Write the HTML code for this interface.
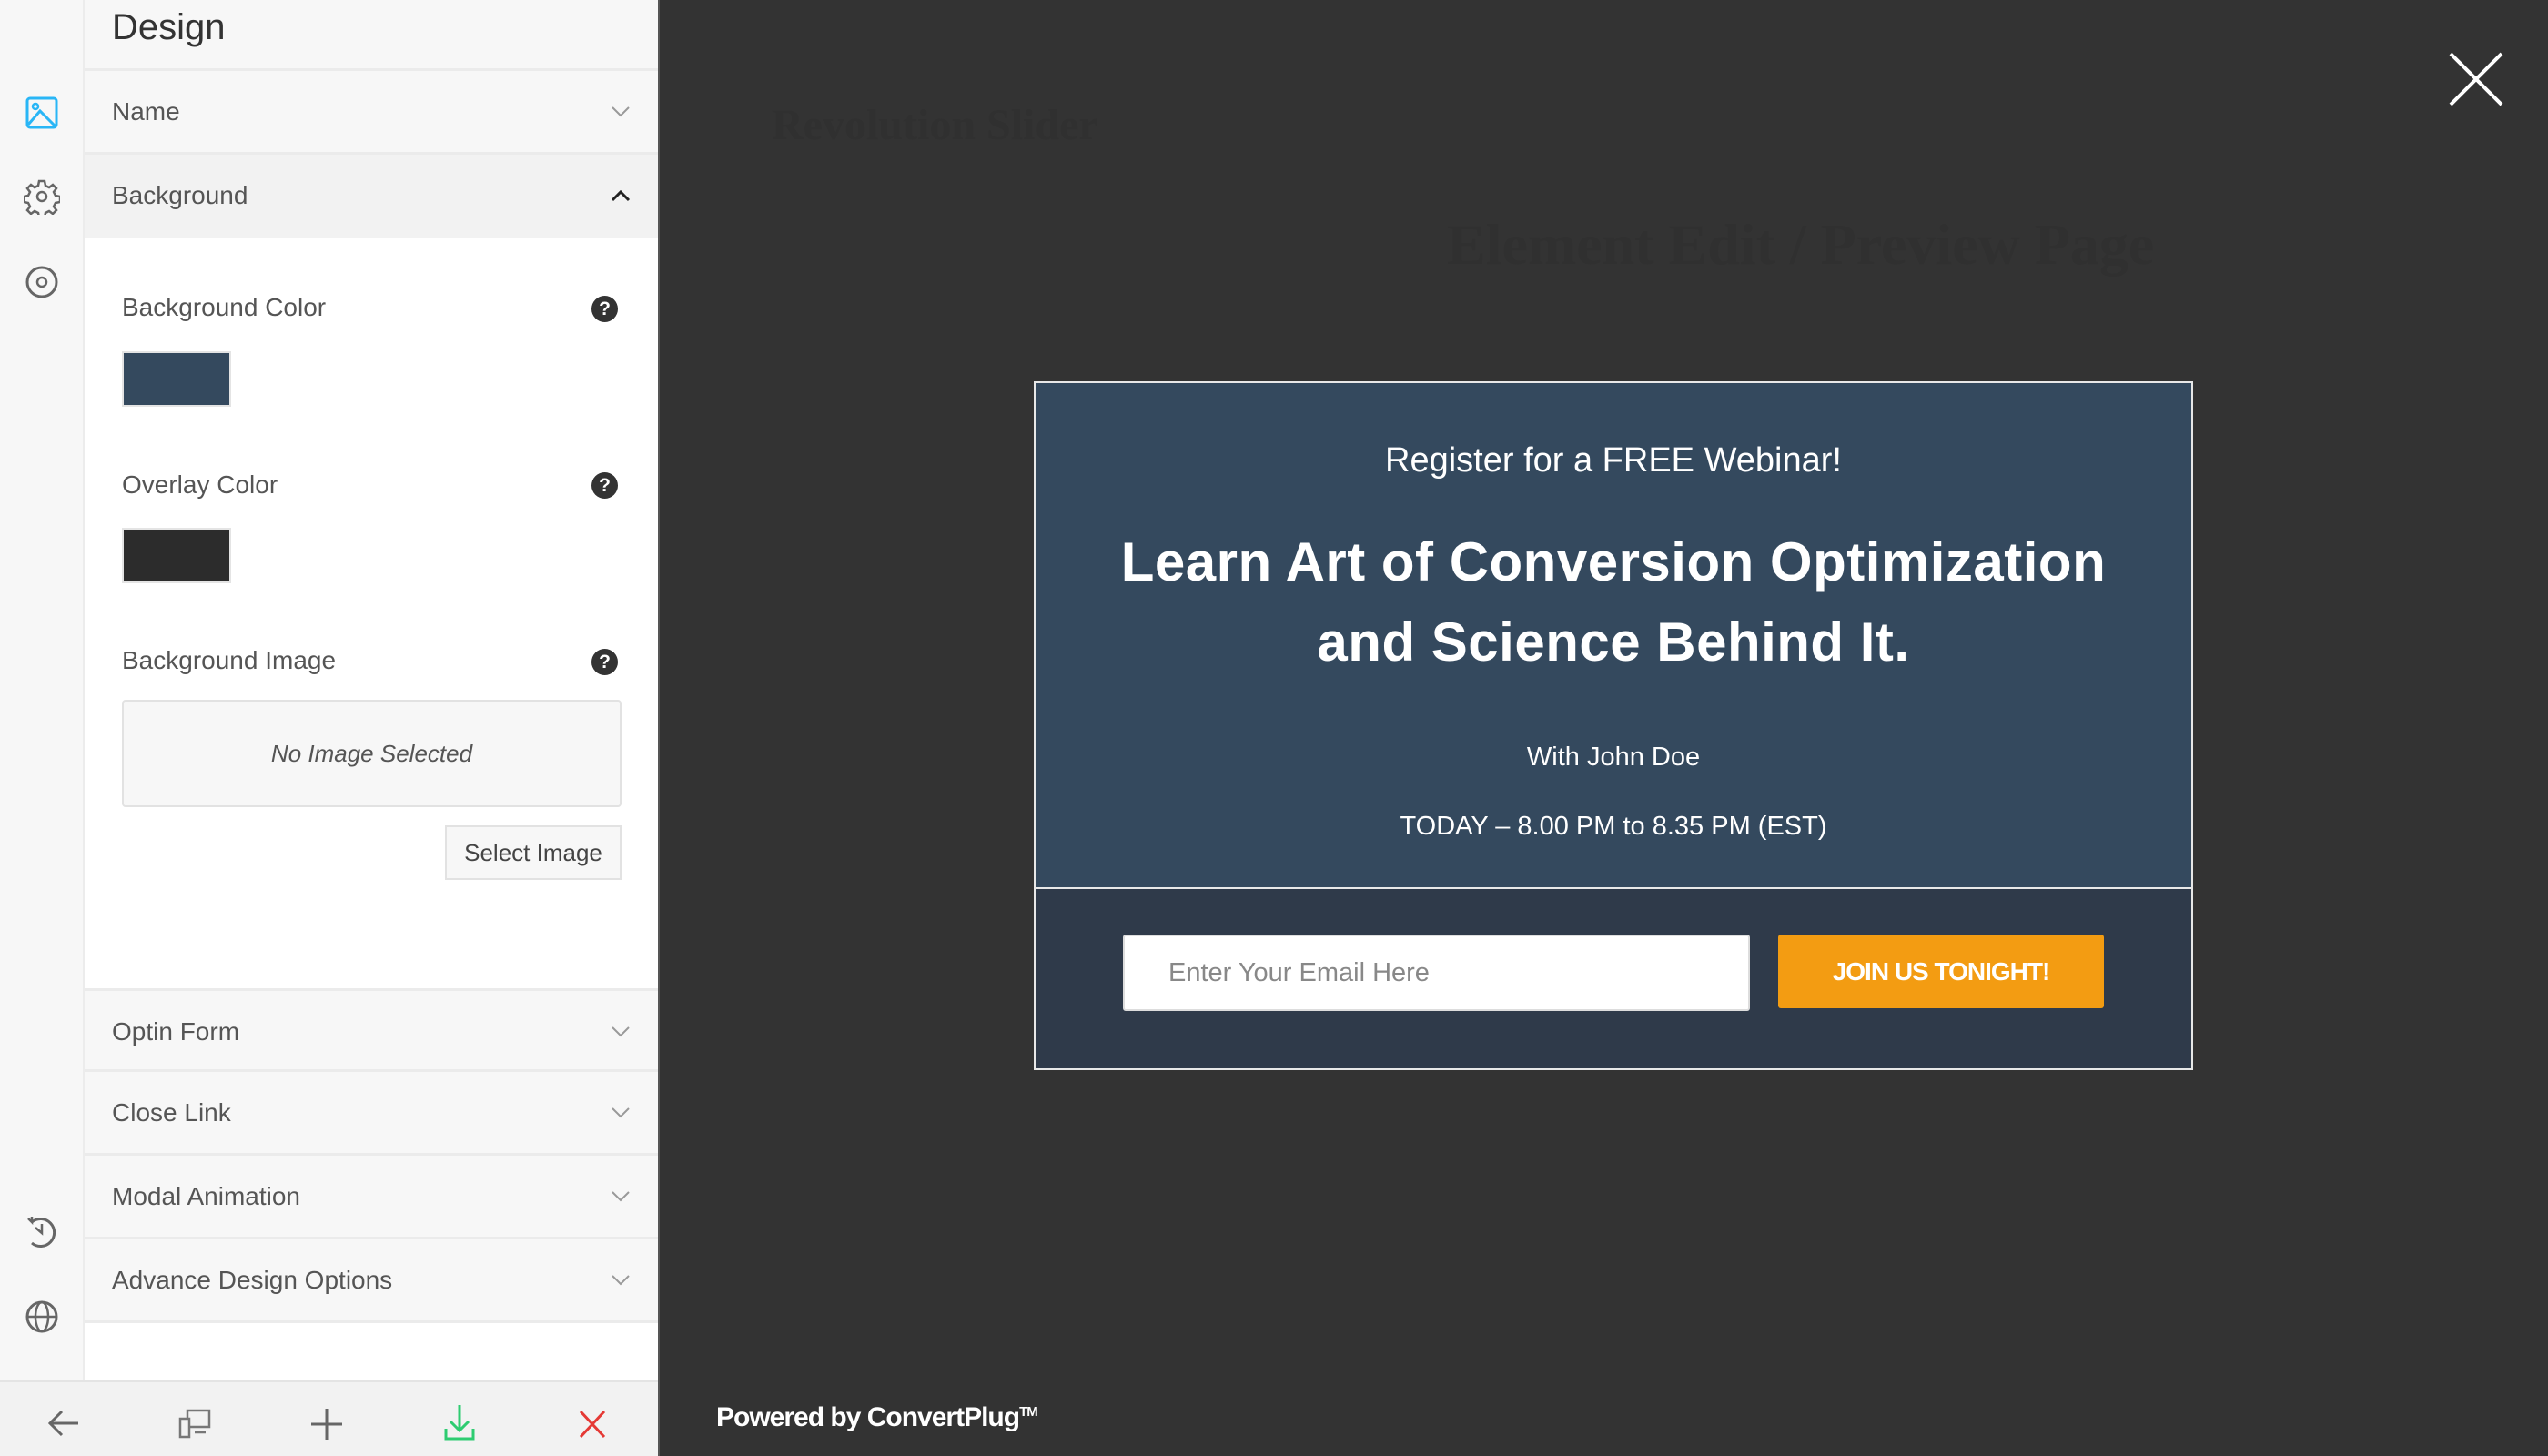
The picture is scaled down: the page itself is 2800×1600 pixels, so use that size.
<!DOCTYPE html>
<html><head><meta charset="utf-8"><style>
*{margin:0;padding:0;box-sizing:border-box}
body{width:2800px;height:1600px;background:#333;font-family:"Liberation Sans",sans-serif;position:relative;overflow:hidden}
.a{position:absolute}
.strip{left:0;top:0;width:93px;height:1516px;background:#f7f7f7;border-right:2px solid #ececec}
.panel{left:93px;top:0;width:630px;height:1516px;background:#fff}
.row{position:absolute;left:93px;width:630px;height:92px;background:#f7f7f7;border-bottom:3px solid #ebebeb;font-size:28px;color:#555;padding-left:30px;line-height:90px}
.row svg{position:absolute;right:30px;top:38px}
.lbl{position:absolute;left:134px;font-size:28px;color:#555}
.q{position:absolute;left:650px;width:29px;height:29px;border-radius:50%;background:#333;color:#fff;font-size:21px;font-weight:bold;text-align:center;line-height:29px}
.mt{position:absolute;left:1137px;width:1272px;text-align:center;color:#fff}
</style></head><body>
<div class="a strip"></div>
<div class="a panel"></div>
<div class="a" style="left:93px;top:0;width:630px;height:78px;background:#f7f7f7;border-bottom:3px solid #ebebeb"></div>
<div class="a" style="left:123px;top:8px;font-size:40px;color:#333">Design</div>
<div class="a" style="left:723px;top:0;width:2px;height:1600px;background:#555"></div>

<div class="row" style="top:78px">Name<svg width="22" height="14"><path d="M2 2l9 9 9-9" fill="none" stroke="#999" stroke-width="2"/></svg></div>
<div class="row" style="top:170px;background:#f2f2f2;border:none;height:91px">Background<svg width="22" height="14"><path d="M2 12l9-9 9 9" fill="none" stroke="#222" stroke-width="3"/></svg></div>

<div class="lbl" style="top:322px">Background Color</div><div class="q" style="top:325px">?</div>
<div class="a" style="left:134px;top:386px;width:120px;height:61px;background:#34495e;border:2px solid #e4e4e4"></div>
<div class="lbl" style="top:517px">Overlay Color</div><div class="q" style="top:519px">?</div>
<div class="a" style="left:134px;top:580px;width:120px;height:61px;background:#2c2c2c;border:2px solid #e4e4e4"></div>
<div class="lbl" style="top:710px">Background Image</div><div class="q" style="top:713px">?</div>
<div class="a" style="left:134px;top:769px;width:549px;height:118px;background:#f7f7f7;border:2px solid #e2e2e2;border-radius:4px;text-align:center;line-height:114px;font-size:26px;font-style:italic;color:#555">No Image Selected</div>
<div class="a" style="left:489px;top:907px;width:194px;height:60px;background:#f7f7f7;border:2px solid #e2e2e2;text-align:center;line-height:56px;font-size:26px;color:#444">Select Image</div>

<div class="row" style="top:1086px;border-top:3px solid #ebebeb">Optin Form<svg width="22" height="14"><path d="M2 2l9 9 9-9" fill="none" stroke="#999" stroke-width="2"/></svg></div>
<div class="row" style="top:1178px">Close Link<svg width="22" height="14"><path d="M2 2l9 9 9-9" fill="none" stroke="#999" stroke-width="2"/></svg></div>
<div class="row" style="top:1270px">Modal Animation<svg width="22" height="14"><path d="M2 2l9 9 9-9" fill="none" stroke="#999" stroke-width="2"/></svg></div>
<div class="row" style="top:1362px">Advance Design Options<svg width="22" height="14"><path d="M2 2l9 9 9-9" fill="none" stroke="#999" stroke-width="2"/></svg></div>

<svg class="a" style="left:28px;top:106px" width="36" height="36"><rect x="2" y="2" width="32" height="32" rx="3" fill="none" stroke="#29b6f6" stroke-width="3"/><circle cx="11" cy="11" r="3" fill="none" stroke="#29b6f6" stroke-width="2.5"/><path d="M3 31l13-15 17 17" fill="none" stroke="#29b6f6" stroke-width="3"/></svg>
<svg class="a" style="left:26px;top:196px" width="40" height="40" viewBox="0 0 40 40"><path d="M17 3h6l1 5 4 2 4-3 4 4-3 4 2 4 5 1v6l-5 1-2 4 3 4-4 4-4-3-4 2-1 5h-6l-1-5-4-2-4 3-4-4 3-4-2-4-5-1v-6l5-1 2-4-3-4 4-4 4 3 4-2z" fill="none" stroke="#666" stroke-width="2.5"/><circle cx="20" cy="20" r="5" fill="none" stroke="#666" stroke-width="2.5"/></svg>
<svg class="a" style="left:27px;top:291px" width="38" height="38"><circle cx="19" cy="19" r="16" fill="none" stroke="#666" stroke-width="3"/><circle cx="19" cy="19" r="5" fill="none" stroke="#666" stroke-width="2.5"/></svg>
<svg class="a" style="left:27px;top:1335px" width="38" height="38"><path d="M8 8A15 15 0 1 1 8 31" fill="none" stroke="#666" stroke-width="3"/><path d="M4 4l4 4v-6M19 10v10l-7-6" fill="none" stroke="#666" stroke-width="2.5"/></svg>
<svg class="a" style="left:27px;top:1428px" width="38" height="38"><circle cx="19" cy="19" r="16" fill="none" stroke="#666" stroke-width="3"/><ellipse cx="19" cy="19" rx="7" ry="16" fill="none" stroke="#666" stroke-width="2.5"/><path d="M3 19h32" stroke="#666" stroke-width="2.5"/></svg>

<div class="a" style="left:0;top:1516px;width:723px;height:84px;background:#f2f2f2;border-top:3px solid #e4e4e4"></div>
<svg class="a" style="left:52px;top:1548px" width="36" height="32"><path d="M34 16H4M16 3L3 16l13 13" fill="none" stroke="#666" stroke-width="3"/></svg>
<svg class="a" style="left:196px;top:1547px" width="36" height="36"><rect x="10" y="3" width="24" height="18" fill="none" stroke="#777" stroke-width="2.5"/><rect x="2" y="12" width="10" height="20" fill="#f2f2f2" stroke="#777" stroke-width="2.5"/><path d="M18 27h12" stroke="#777" stroke-width="2.5"/></svg>
<svg class="a" style="left:341px;top:1547px" width="36" height="36"><path d="M18 1v34M1 18h34" stroke="#666" stroke-width="3"/></svg>
<svg class="a" style="left:487px;top:1542px" width="36" height="42"><path d="M18 2v28M8 20l10 10 10-10M3 28v11h30V28" fill="none" stroke="#2ecc71" stroke-width="3"/></svg>
<svg class="a" style="left:635px;top:1549px" width="32" height="32"><path d="M3 2l26 28M29 2L3 30" stroke="#e53935" stroke-width="3"/></svg>

<div class="a" style="left:848px;top:110px;font-size:48px;font-weight:bold;color:#303030;font-family:'Liberation Serif',serif">Revolution Slider</div>
<div class="a" style="left:1590px;top:232px;font-size:64px;font-weight:bold;color:#303030;font-family:'Liberation Serif',serif">Element Edit / Preview Page</div>

<svg class="a" style="left:2690px;top:56px" width="62" height="62"><path d="M3 3l56 56M59 3L3 59" stroke="#fff" stroke-width="4"/></svg>

<div class="a" style="left:1136px;top:419px;width:1274px;height:757px;border:2px solid #e8e8e8;background:#2f3a4a"></div>
<div class="a" style="left:1138px;top:421px;width:1270px;height:556px;background:#34495e;border-bottom:2px solid #e8e8e8"></div>
<div class="mt" style="top:485px;font-size:38px">Register for a FREE Webinar!</div>
<div class="mt" style="top:574px;font-size:60px;font-weight:bold;line-height:88px;letter-spacing:0.5px">Learn Art of Conversion Optimization<br>and Science Behind It.</div>
<div class="mt" style="top:816px;font-size:29px">With John Doe</div>
<div class="mt" style="top:892px;font-size:29px">TODAY – 8.00 PM to 8.35 PM (EST)</div>
<div class="a" style="left:1234px;top:1027px;width:689px;height:84px;background:#fff;border:2px solid #ddd;border-radius:3px;font-size:29px;color:#888;line-height:80px;padding-left:48px">Enter Your Email Here</div>
<div class="a" style="left:1954px;top:1027px;width:358px;height:81px;background:#f39c12;border-radius:3px;font-size:28px;font-weight:bold;color:#fff;text-align:center;line-height:81px;letter-spacing:-1px">JOIN US TONIGHT!</div>

<div class="a" style="left:787px;top:1541px;font-size:30px;font-weight:bold;color:#fff;letter-spacing:-1px">Powered by ConvertPlug<sup style="font-size:15px">TM</sup></div>
</body></html>
